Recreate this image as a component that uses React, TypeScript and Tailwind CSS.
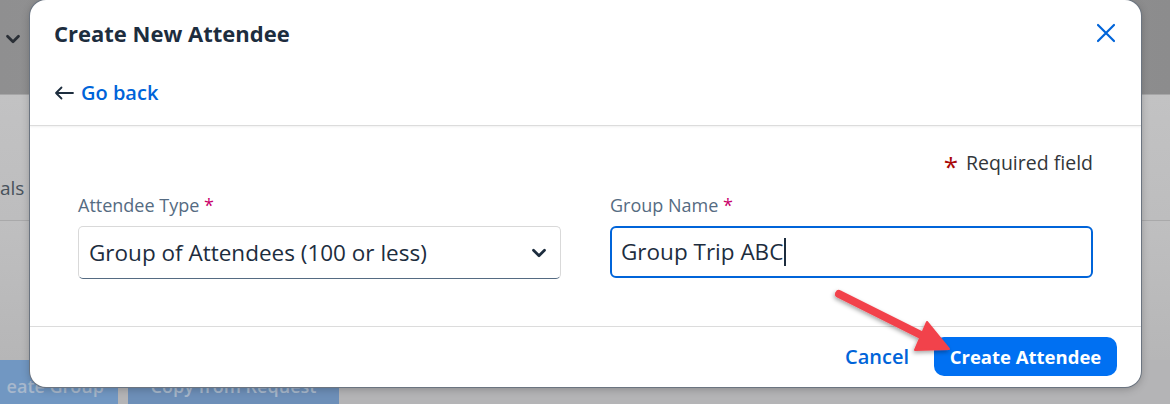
import { ChevronDown } from 'lucide-react';

const font = { fontFamily: '"Open Sans", "Liberation Sans", Arial, sans-serif' };

function Backdrop() {
  return (
    <div className="flex h-[404px] w-[1170px] flex-col bg-[#bebebf]">
      <div className="flex h-[95px] items-start bg-gradient-to-r from-[#8f8f90] via-[#9a9a9b] to-[#8c8c8d] border-b border-[#a6a6a7]">
        <ChevronDown className="ml-[2px] mt-[28px] size-[22px] text-[#2a2f36]" strokeWidth={3} />
      </div>
      <div className="h-[126px] border-b border-[#a9a9aa] bg-gradient-to-b from-[#c2c2c3] to-[#bdbdbe] pt-[79px] text-[19px] text-[#48525c]">
        <span>als</span>
      </div>
      <div className="flex-1 bg-gradient-to-b from-[#bfbfc0] to-[#b6b6b7]" />
      <div className="flex h-[44px] gap-[10px] bg-[#b4b4b6]">
        <div className="flex w-[118px] items-end justify-end overflow-hidden whitespace-nowrap bg-[#7197c2] pb-[4px] pr-[14px] text-[18px] font-semibold text-[#a8b8cc]">
          eate Group
        </div>
        <div className="flex w-[211px] items-end justify-center overflow-hidden whitespace-nowrap bg-[#6d8fb8] pb-[4px] text-[18px] font-semibold text-[#a8b8cc]">
          Copy from Request
        </div>
      </div>
    </div>
  );
}

function Modal() {
  return (
    <div className="absolute left-[30px] top-0 flex h-[387px] w-[1111px] flex-col overflow-hidden rounded-2xl bg-white shadow-[0_0_0_1px_#6b7480,0_2px_8px_rgba(0,0,0,0.25)]">
      <div className="h-[126px] border-b border-[#dcdcdc] shadow-[0_1px_2px_rgba(0,0,0,0.06)]">
        <div className="flex h-[66px] items-center justify-between pl-[24px] pr-[24px]">
          <h1 className="text-[22px] font-bold text-[#1d2d3e]">Create New Attendee</h1>
          <svg width="20" height="20" viewBox="0 0 20 20" className="mr-[1px]">
            <path d="M2 2L18 18M18 2L2 18" stroke="#0064d9" strokeWidth="2.2" strokeLinecap="round" />
          </svg>
        </div>
        <div className="mt-[13px] flex h-[28px] items-center gap-[7px] pl-[24px]">
          <svg width="20" height="14" viewBox="0 0 20 14">
            <path d="M19 7H2M7.5 1.5L2 7l5.5 5.5" stroke="#1d2d3e" strokeWidth="1.8" fill="none" strokeLinecap="round" strokeLinejoin="round" />
          </svg>
          <span className="text-[20px] leading-[28px] font-semibold text-[#0064d9]">Go back</span>
        </div>
      </div>

      <div className="flex flex-1 flex-col px-[48px]">
        <div className="mt-[25px] flex h-[24px] items-center justify-end gap-[8px] text-[19.5px] leading-[24px] text-[#32363a]">
          <span className="text-[26px] leading-none text-[#aa0808] translate-y-[3px]">*</span>
          <span>Required field</span>
        </div>
        <div className="mt-[19px] grid grid-cols-2 gap-[49px]">
          <div className="flex flex-col">
            <label className="h-[22px] text-[18px] leading-[22px] text-[#556b82]">
              Attendee Type <span className="text-[#c9006b]">*</span>
            </label>
            <div className="mt-[10px] flex h-[53px] items-center justify-between rounded-[5px] border border-[#d9d9d9] border-b-[#556b82] pl-[10px] pr-[10px] text-[22.5px] text-[#1d2d3e]">
              <span>Group of Attendees (100 or less)</span>
              <ChevronDown className="size-[22px] text-[#1d2d3e]" strokeWidth={3} />
            </div>
          </div>
          <div className="flex flex-col">
            <label className="h-[22px] text-[18px] leading-[22px] text-[#556b82]">
              Group Name <span className="text-[#c9006b]">*</span>
            </label>
            <div className="mt-[10px] flex h-[52px] items-center rounded-[6px] border-2 border-[#0064d9] pl-[9px] text-[22.5px] text-[#1d2d3e]">
              <span>Group Trip ABC</span>
              <span className="ml-[1px] h-[28px] w-[2px] bg-[#1d2d3e]" />
            </div>
          </div>
        </div>
      </div>

      <div className="flex h-[61px] items-center justify-end gap-[25px] border-t border-[#dcdcdc] pr-[24px]">
        <span className="text-[20px] font-semibold text-[#0064d9]">Cancel</span>
        <button className="mt-[-1px] h-[39px] w-[183px] rounded-[10px] bg-[#0070f2] text-[18.5px] font-bold text-white">
          Create Attendee
        </button>
      </div>
    </div>
  );
}

function Arrow() {
  return (
    <svg className="pointer-events-none absolute left-0 top-0" width="1170" height="404">
      <defs>
        <filter id="sh" x="-20%" y="-20%" width="140%" height="140%">
          <feDropShadow dx="-1" dy="2" stdDeviation="2" floodColor="#000" floodOpacity="0.35" />
        </filter>
      </defs>
      <g filter="url(#sh)" fill="#f2434b" stroke="#f2434b">
        <line x1="839" y1="294" x2="925" y2="337" strokeWidth="8" strokeLinecap="round" />
        <polygon points="949,349 915,350 927,322" strokeWidth="2" strokeLinejoin="round" />
      </g>
    </svg>
  );
}

export default function App() {
  return (
    <div className="relative h-[404px] w-[1170px] overflow-hidden" style={font}>
      <Backdrop />
      <Modal />
      <Arrow />
    </div>
  );
}
